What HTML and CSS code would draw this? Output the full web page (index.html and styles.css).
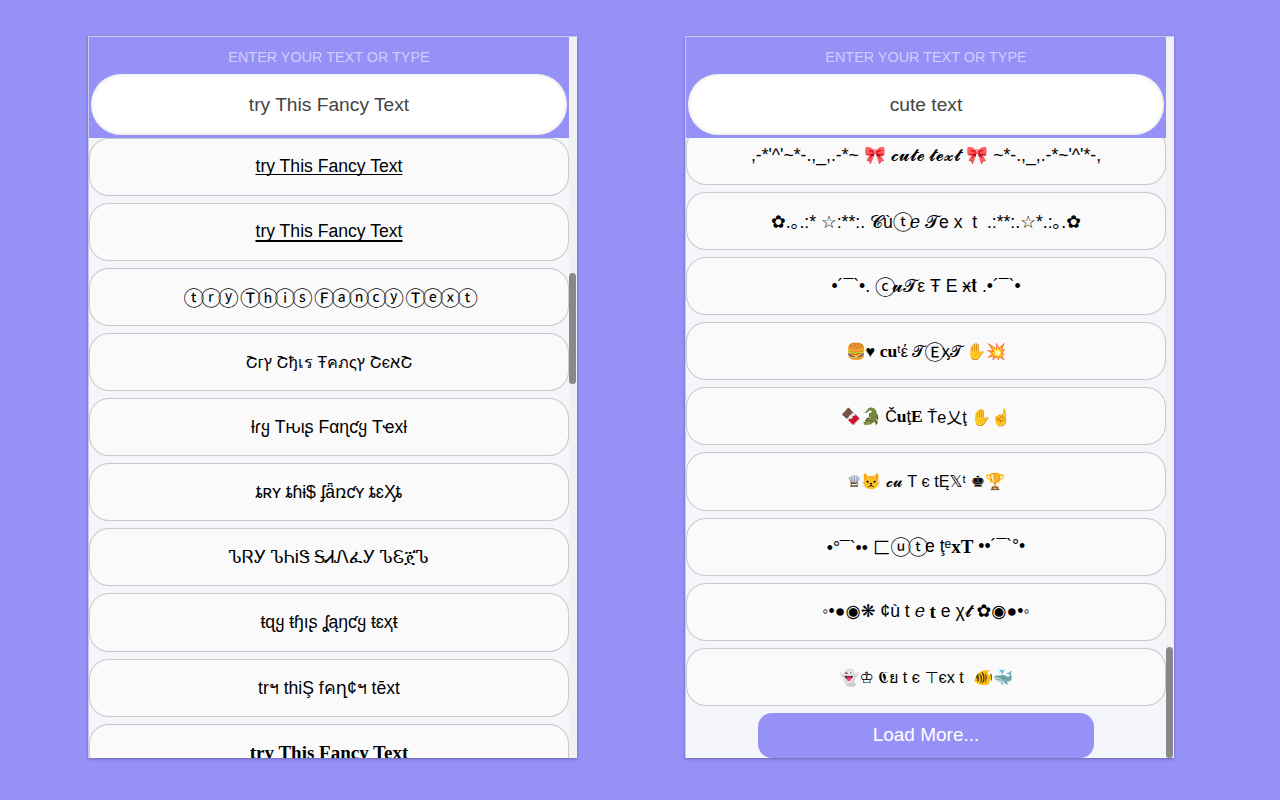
FILE: index.html
```html
<!DOCTYPE html>
<html lang="en">
<head>
<meta charset="utf-8">
<title>Fancy Text</title>
<link rel="stylesheet" href="styles.css">
</head>
<body>
<section class="panel">
  <div class="main">
    <header class="head">
      <div class="label">ENTER YOUR TEXT OR TYPE</div>
      <div class="input">try This Fancy Text</div>
    </header>
    <div class="list">
      <div class="card"><span class="under-one">try This Fancy Text</span></div>
      <div class="card"><span class="under-two">try This Fancy Text</span></div>
      <div class="card"><span class="circled">ⓣⓡⓨ Ⓣⓗⓘⓢ Ⓕⓐⓝⓒⓨ Ⓣⓔⓧⓣ</span></div>
      <div class="card tight">Շгץ Շђเร Ŧคภςץ ՇєאՇ</div>
      <div class="card">ƚɾყ Tԋιʂ Fαɳƈყ Tҽxƚ</div>
      <div class="card">ȶʀʏ ȶɦɨ$ ʄǟռƈʏ ȶɛӼȶ</div>
      <div class="card">ᏖᏒᎩ ᏖᏂᎥᏕ ᎦᏗᏁፈᎩ ᏖᏋጀᏖ</div>
      <div class="card">ŧɋყ ŧɧıʂ ʆąŋƈყ ŧɛҳŧ</div>
      <div class="card">trฯ thiŞ fคղ¢ฯ tēxt</div>
      <div class="card serif">try This Fancy Text</div>
    </div>
  </div>
  <div class="track"><div class="thumb thumb-left"></div></div>
</section>
<section class="panel">
  <div class="main">
    <header class="head">
      <div class="label">ENTER YOUR TEXT OR TYPE</div>
      <div class="input">cute text</div>
    </header>
    <div class="list list-end">
      <div class="card">,-*'^'~*-.,_,.-*~ 🎀 𝓬𝓾𝓽𝓮 𝓽𝓮𝔁𝓽 🎀 ~*-.,_,.-*~'^'*-,</div>
      <div class="card">✿.｡.:* ☆:**:. 𝓒ù<span class="circled">ⓣ</span>𝑒 𝓣e x  t  .:**:.☆*.:｡.✿</div>
      <div class="card">•´¯`•. <span class="circled">ⓒ</span>𝓾𝓣ε Ŧ E ӿ𝐭 .•´¯`•</div>
      <div class="card tight">🍔♥ <span class="bs">cu</span>ᵗέ 𝓣<span class="circled">Ⓔ</span>ᶍ𝓣 ✋💥</div>
      <div class="card tight">🍫🐊 Č<span class="bs">u</span>ţ<span class="bs">E</span> Ťe乂ţ ✋☝️</div>
      <div class="card tight">♕<span class="emoji">😾</span> 𝓬𝓾 T є tĘ𝕏ᵗ ♚🏆</div>
      <div class="card">•°¯`•• 匚<span class="circled">ⓤⓣ</span>e ţᵉ<span class="bs">xT</span> ••´¯`°•</div>
      <div class="card">◦•●◉❋ ¢ù t 𝑒 <span class="bs">t</span> e χ𝓽 ✿◉●•◦</div>
      <div class="card tight">👻♔ 𝕮ย t є ⊤єx t  🐠🐳</div>
      <button class="more">Load More...</button>
    </div>
  </div>
  <div class="track"><div class="thumb thumb-right"></div></div>
</section>
</body>
</html>
```
FILE: styles.css
```css
html, body { margin: 0; height: 100%; }
body {
  background: #9691f7;
  display: flex;
  gap: 108px;
  padding: 36px 0 0 88px;
  box-sizing: border-box;
  height: 800px;
  overflow: hidden;
  font-family: "Liberation Sans", "DejaVu Sans", "Noto Sans CJK SC", sans-serif;
}
.panel {
  width: 489px;
  height: 722px;
  box-sizing: border-box;
  display: flex;
  background: #f4f6fb;
  border: 1px solid #c9c9ec;
  border-right: 0;
  border-bottom: 0;
  box-shadow: 0 1px 3px rgba(0,0,0,.3);
}
.main { flex: 1; min-width: 0; display: flex; flex-direction: column; }
.head {
  height: 100.5px;
  flex: none;
  background: #9691f7;
  box-sizing: border-box;
  padding: 11px 2px 0;
  text-align: center;
}
.label { color: #cfcfff; font-size: 14.4px; line-height: 18px; margin-bottom: 8px; }
.input {
  height: 61px;
  box-sizing: border-box;
  background: #fff;
  border-radius: 30px;
  color: #444;
  font-size: 19.2px;
  display: flex;
  align-items: center;
  justify-content: center;
  box-shadow: inset 0 0 4px rgba(0,0,0,.15);
}
.list {
  flex: 1;
  min-height: 0;
  overflow: hidden;
  display: flex;
  flex-direction: column;
  gap: 7px;
}
.list-end { justify-content: flex-end; }
.card {
  flex: none;
  height: 58.15px;
  box-sizing: border-box;
  background: #fafafa;
  border: 1px solid #ccc9c9;
  border-radius: 20px;
  color: #000;
  font-size: 17.6px;
  display: flex;
  align-items: center;
  justify-content: center;
  white-space: pre;
  box-shadow: 0 0 1px rgba(0,0,0,.12);
}
.tight { font-size: 16.2px; }
.under-one, .under-two {
  text-decoration: underline;
  text-decoration-skip-ink: none;
}
.under-one { text-decoration-thickness: 1px; text-underline-offset: 2px; }
.under-two { text-decoration-thickness: 2px; text-underline-offset: 3px; }
.circled {
  font-family: "Noto Sans CJK JP", "DejaVu Sans", sans-serif;
  font-size: 20.7px;
  letter-spacing: -3.37px;
  word-spacing: 3.4px;
  line-height: 1;
}
.bs { font-family: "Liberation Serif", serif; font-weight: bold; font-size: 1.08em; }
.emoji { font-family: "Noto Color Emoji", sans-serif; }
.serif { font-family: "Liberation Serif", serif; font-weight: bold; font-size: 19px; }
.more {
  flex: none;
  align-self: center;
  width: 336px;
  height: 45px;
  padding-bottom: 2px;
  border: 0;
  border-radius: 14px;
  background: #9691f7;
  color: #fff;
  font: 19px "Liberation Sans", sans-serif;
}
.track { width: 8px; flex: none; background: #f1f1f1; position: relative; }
.thumb { position: absolute; left: 0; width: 7px; height: 111px; border-radius: 3.5px; background: #888; }
.thumb-left { top: 236px; }
.thumb-right { top: 610px; }
```
